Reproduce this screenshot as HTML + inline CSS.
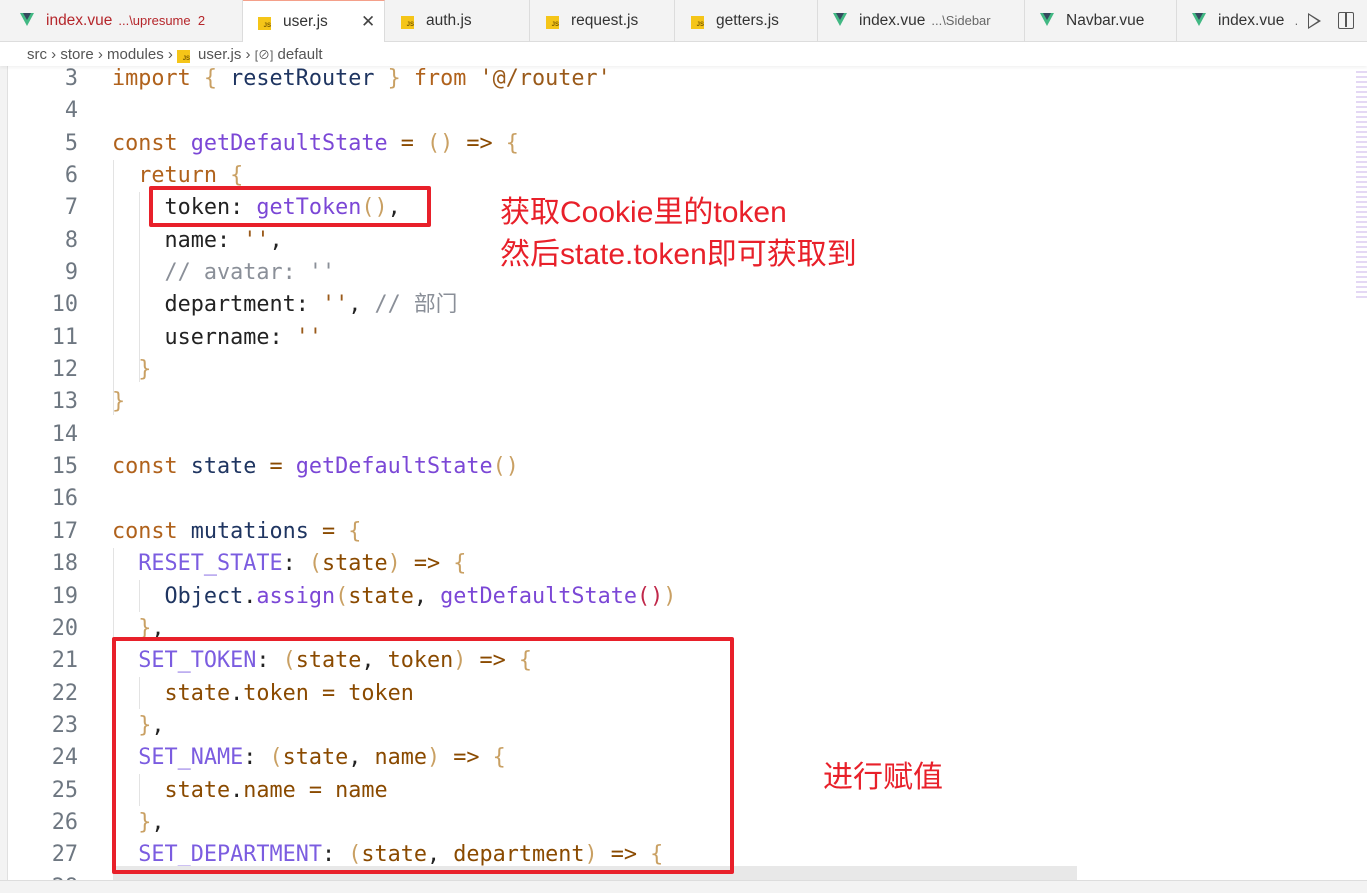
<!DOCTYPE html>
<html><head><meta charset="utf-8"><style>
*{margin:0;padding:0;box-sizing:border-box}
body{width:1367px;height:893px;overflow:hidden;background:#fff;font-family:"Liberation Sans","Noto Sans CJK SC",sans-serif;position:relative}
.tabs{position:absolute;left:0;top:0;width:1367px;height:42px;background:#f3f3f3;border-bottom:1px solid #ddd}
.tab{position:absolute;top:0;height:42px;border-right:1px solid #dcdcdc;font-size:15.5px;color:#333;line-height:42px;white-space:nowrap;overflow:hidden}
.tab .d{font-size:13px;color:#666;margin-left:6px}
.js{display:inline-block;width:13px;height:13px;background:#f5c518;color:#7a5a00;font-size:6px;line-height:18px;text-align:right;vertical-align:-1px;margin-right:12px;font-weight:bold}
.v{display:inline-block;width:0;height:0;border-left:7px solid transparent;border-right:7px solid transparent;border-top:13px solid #41b883;vertical-align:-1px;margin-right:12px;position:relative}
.v:after{content:"";position:absolute;left:-4px;top:-13px;border-left:4px solid transparent;border-right:4px solid transparent;border-top:7px solid #35495e}
.bc{position:absolute;top:42px;left:0;width:1367px;height:24px;background:#fff;font-size:15px;color:#555;line-height:26px;padding-left:27px;box-shadow:0 2px 3px rgba(0,0,0,.05);z-index:2}
.code{position:absolute;left:0;top:63px;height:817px;overflow:hidden;font-family:"DejaVu Sans Mono","Noto Sans CJK SC",monospace;font-size:21.8px;z-index:3}
.l{height:32.35px;line-height:32.35px;white-space:pre;position:relative}
.n{display:inline-block;width:78px;text-align:right;color:#6e7781;margin-right:34px}
.k{color:#b0621c}.i{color:#1f3561}.f{color:#7b47d6}.s{color:#9a5a1a}.p{color:#8a4a00}.b{color:#c9a063}.c{color:#8a8f98}.pr{color:#7b5ce0}.o{color:#8a4a00}.w{color:#222}
.guide{position:absolute;width:1px;background:#e3e3e3}
.box{position:absolute;border:4px solid #e8202a;border-radius:2px;z-index:5}
.ann{position:absolute;color:#e8202a;font-size:30px;font-family:"Liberation Sans","Noto Sans CJK SC",sans-serif;line-height:42px;z-index:5}
</style></head><body>
<div class="tabs">
<div class="tab" style="left:0;width:243px;padding-left:20px;color:#b5262b"><span class="v"></span>index.vue<span class="d" style="color:#b5262b">...\upresume&nbsp; 2</span></div>
<div class="tab" style="left:243px;width:142px;background:#fff;padding-left:15px;border-top:1px solid #f4a08a;height:43px"><span class="js">JS</span>user.js<span style="position:absolute;left:118px;font-size:17px;color:#444">✕</span></div>
<div class="tab" style="left:385px;width:145px;padding-left:16px"><span class="js">JS</span>auth.js</div>
<div class="tab" style="left:530px;width:145px;padding-left:16px"><span class="js">JS</span>request.js</div>
<div class="tab" style="left:675px;width:143px;padding-left:16px"><span class="js">JS</span>getters.js</div>
<div class="tab" style="left:818px;width:207px;padding-left:15px"><span class="v"></span>index.vue<span class="d">...\Sidebar</span></div>
<div class="tab" style="left:1025px;width:152px;padding-left:15px"><span class="v"></span>Navbar.vue</div>
<div class="tab" style="left:1177px;width:120px;padding-left:15px;border:none"><span class="v"></span>index.vue <span class="d">...'</span></div>
<div style="position:absolute;left:1308px;top:13px;border-left:13px solid #555;border-top:8px solid transparent;border-bottom:8px solid transparent"></div>
<div style="position:absolute;left:1309px;top:15px;border-left:9px solid #f3f3f3;border-top:6px solid transparent;border-bottom:6px solid transparent"></div>
<div style="position:absolute;left:1338px;top:12px;width:16px;height:17px;border:1.5px solid #555;border-radius:2px"><div style="position:absolute;left:6px;top:0;width:1.5px;height:14px;background:#555"></div></div>
</div>
<div class="bc">src › store › modules › <span class="js" style="margin-right:8px">JS</span>user.js › <span style="font-size:12px">[⊘]</span> default</div>
<div style="position:absolute;left:0;top:66px;width:8px;height:814px;background:#f3f3f3;border-right:1px solid #e0e0e0"></div>
<div class="guide" style="left:113px;top:160px;height:255px"></div>
<div class="guide" style="left:139px;top:192px;height:190px"></div>
<div class="guide" style="left:113px;top:548px;height:340px"></div>
<div class="guide" style="left:139px;top:580px;height:32px"></div>
<div class="guide" style="left:139px;top:677px;height:32px"></div>
<div class="guide" style="left:139px;top:774px;height:32px"></div>
<div style="position:absolute;left:113px;top:866px;width:964px;height:14px;background:#e8e8e8;z-index:4"></div>
<div class="code">
<div class="l"><span class="n">3</span><span class="k">import</span> <span class="b">{</span> <span class="i">resetRouter</span> <span class="b">}</span> <span class="k">from</span> <span class="s">'@/router'</span></div>
<div class="l"><span class="n">4</span></div>
<div class="l"><span class="n">5</span><span class="k">const</span> <span class="f">getDefaultState</span> <span class="o">=</span> <span class="b">()</span> <span class="o">=&gt;</span> <span class="b">{</span></div>
<div class="l"><span class="n">6</span>  <span class="k">return</span> <span class="b">{</span></div>
<div class="l"><span class="n">7</span>    <span class="w">token:</span> <span class="f">getToken</span><span class="b">()</span><span class="w">,</span></div>
<div class="l"><span class="n">8</span>    <span class="w">name:</span> <span class="s">''</span><span class="w">,</span></div>
<div class="l"><span class="n">9</span>    <span class="c">// avatar: ''</span></div>
<div class="l"><span class="n">10</span>    <span class="w">department:</span> <span class="s">''</span><span class="w">,</span> <span class="c">// 部门</span></div>
<div class="l"><span class="n">11</span>    <span class="w">username:</span> <span class="s">''</span></div>
<div class="l"><span class="n">12</span>  <span class="b">}</span></div>
<div class="l"><span class="n">13</span><span class="b">}</span></div>
<div class="l"><span class="n">14</span></div>
<div class="l"><span class="n">15</span><span class="k">const</span> <span class="i">state</span> <span class="o">=</span> <span class="f">getDefaultState</span><span class="b">()</span></div>
<div class="l"><span class="n">16</span></div>
<div class="l"><span class="n">17</span><span class="k">const</span> <span class="i">mutations</span> <span class="o">=</span> <span class="b">{</span></div>
<div class="l"><span class="n">18</span>  <span class="pr">RESET_STATE</span><span class="w">:</span> <span class="b">(</span><span class="p">state</span><span class="b">)</span> <span class="o">=&gt;</span> <span class="b">{</span></div>
<div class="l"><span class="n">19</span>    <span class="i">Object</span><span class="w">.</span><span class="f">assign</span><span class="b">(</span><span class="p">state</span><span class="w">,</span> <span class="f">getDefaultState</span><span style="color:#c0284a">()</span><span class="b">)</span></div>
<div class="l"><span class="n">20</span>  <span class="b">}</span><span class="w">,</span></div>
<div class="l"><span class="n">21</span>  <span class="pr">SET_TOKEN</span><span class="w">:</span> <span class="b">(</span><span class="p">state</span><span class="w">,</span> <span class="p">token</span><span class="b">)</span> <span class="o">=&gt;</span> <span class="b">{</span></div>
<div class="l"><span class="n">22</span>    <span class="p">state</span><span class="w">.</span><span class="p">token</span> <span class="o">=</span> <span class="p">token</span></div>
<div class="l"><span class="n">23</span>  <span class="b">}</span><span class="w">,</span></div>
<div class="l"><span class="n">24</span>  <span class="pr">SET_NAME</span><span class="w">:</span> <span class="b">(</span><span class="p">state</span><span class="w">,</span> <span class="p">name</span><span class="b">)</span> <span class="o">=&gt;</span> <span class="b">{</span></div>
<div class="l"><span class="n">25</span>    <span class="p">state</span><span class="w">.</span><span class="p">name</span> <span class="o">=</span> <span class="p">name</span></div>
<div class="l"><span class="n">26</span>  <span class="b">}</span><span class="w">,</span></div>
<div class="l"><span class="n">27</span>  <span class="pr">SET_DEPARTMENT</span><span class="w">:</span> <span class="b">(</span><span class="p">state</span><span class="w">,</span> <span class="p">department</span><span class="b">)</span> <span class="o">=&gt;</span> <span class="b">{</span></div>
<div class="l"><span class="n">28</span>    <span class="p">state</span><span class="w">.</span><span class="p">department</span> <span class="o">=</span> <span class="p">department</span></div>
</div>
<div class="box" style="left:149px;top:186px;width:282px;height:41px"></div>
<div class="box" style="left:112px;top:637px;width:622px;height:237px"></div>
<div class="ann" style="left:500px;top:192px">获取Cookie里的token</div>
<div class="ann" style="left:500px;top:234px">然后state.token即可获取到</div>
<div class="ann" style="left:823px;top:757px">进行赋值</div>
<div style="position:absolute;left:0;top:880px;width:1367px;height:13px;background:#f3f3f3;border-top:1px solid #ddd;z-index:6"></div>
<div style="position:absolute;left:1356px;top:68px;width:11px;height:230px;background:repeating-linear-gradient(#fff 0 3px,#d8c8f0 3px 5px);opacity:.7"></div>
</body></html>
